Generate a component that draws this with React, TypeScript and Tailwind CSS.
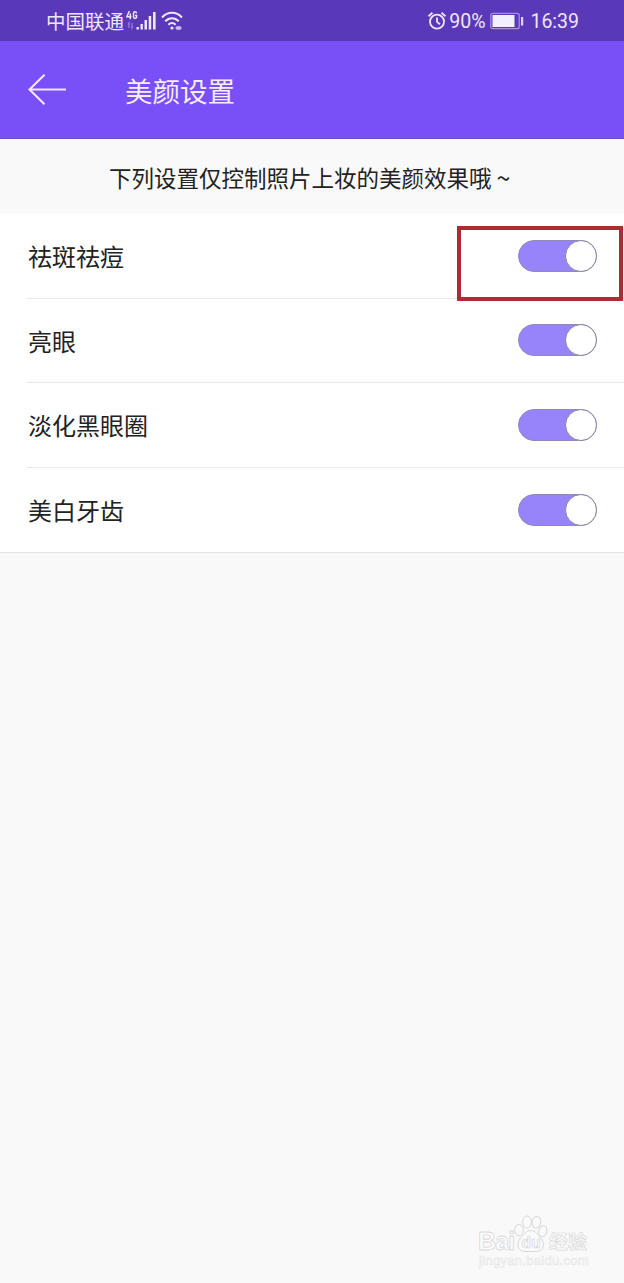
import React, { useState } from "react";

const initialSettings = [
  { id: "spots", label: "祛斑祛痘", enabled: true },
  { id: "eyes", label: "亮眼", enabled: true },
  { id: "darkCircles", label: "淡化黑眼圈", enabled: true },
  { id: "teeth", label: "美白牙齿", enabled: true },
];

interface ToggleProps {
  label: string;
  checked: boolean;
  onChange: () => void;
}

const SignalIcon = () => (
  <svg className="ml-[2px] h-[22px] w-[31px]" viewBox="0 0 31 22" fill="#eee6fb">
    <g fill="none" stroke="#eee6fb" strokeWidth="1.5">
      <path d="M3.4 1 .8 6.8h4.6M4.3 3.5v5.8" />
      <path d="M10.6 3.4C10.300 1.300 7.500 1.300 7.500 3.400v3.300c0 2.300 3.100 2.300 3.100 0V5.600H9" />
    </g>
    <path
      d="M3 18v-5L2 14.500M6 13v5l1-1.500"
      fill="none"
      stroke="#9a78e6"
      strokeWidth="1.3"
    />
    <rect x="10.5" y="17" width="2.4" height="2.5" />
    <rect x="14.5" y="14" width="2.4" height="5.5" />
    <rect x="18.5" y="10" width="2.5" height="9.5" />
    <rect x="22.7" y="6" width="2.5" height="13.5" />
    <rect x="27" y="2" width="2.6" height="17.5" />
  </svg>
);

const WifiIcon = () => (
  <svg
    className="ml-[4px] h-[22px] w-[22px]"
    viewBox="0 0 22 22"
    fill="none"
    stroke="#eee6fb"
    strokeWidth="2"
  >
    <path d="M1 7.5c5.7-6.3 14.3-6.3 20 0" />
    <path d="M4.2 11.3c4-4.2 9.600-4.200 13.600 0" />
    <path d="M7.3 14.8c2.300-2.300 5.100-2.300 7.400 0" />
    <circle cx="11" cy="18" r="1.6" fill="#eee6fb" stroke="none" />
    <ellipse cx="17.5" cy="18" rx="3" ry="1.900" fill="#cbb8f3" stroke="none" />
  </svg>
);

const AlarmIcon = () => (
  <svg
    className="h-[20px] w-[20px]"
    viewBox="0 0 20 20"
    fill="none"
    stroke="#eee6fb"
    strokeWidth="1.8"
  >
    <circle cx="10" cy="10.7" r="7" />
    <path d="M10 6.5v4.4l3 2.3M1.5 5.2l4-3.4M18.5 5.2l-4-3.4" />
  </svg>
);

const BatteryIcon = () => (
  <svg className="ml-[5px] h-[18px] w-[34px]" viewBox="0 0 34 18">
    <rect
      x="0.8"
      y="1.3"
      width="28.4"
      height="15.4"
      rx="2"
      fill="none"
      stroke="#a98ee6"
      strokeWidth="1.3"
    />
    <rect x="2.5" y="3" width="22" height="12" fill="#f4effc" />
    <rect x="31" y="5" width="2.2" height="8.5" fill="#e0d4f7" />
  </svg>
);

const Toggle = ({ label, checked, onChange }: ToggleProps) => (
  <button
    type="button"
    role="switch"
    aria-label={label}
    aria-checked={checked}
    onClick={onChange}
    className={`flex h-8 w-[79px] items-center rounded-full border ${
      checked
        ? "justify-end border-[#9387bd] bg-[#9784fa]"
        : "justify-start border-gray-400 bg-gray-200"
    }`}
  >
    <span className="-mr-px h-8 w-8 shrink-0 rounded-full border-[1.5px] border-[#88819f] bg-white" />
  </button>
);

const Watermark = () => (
  <div className="absolute top-[1213px] left-[478px] w-[114px] text-[#fcfcfc]">
    <div className="flex h-[41px] items-end">
      <span className="w-[36px] font-['Liberation_Sans'] text-[25px] leading-[25px] font-bold tracking-[-0.8px] [-webkit-text-stroke:0.8px_#d9d9d9]">
        Bai
      </span>
      <svg
        className="h-[41px] w-[34px] shrink-0"
        viewBox="0 0 34 41"
        fill="#fafafa"
        stroke="#d8d8d8"
      >
        <ellipse cx="5" cy="17" rx="4.3" ry="5.700" />
        <ellipse cx="13" cy="9" rx="4.3" ry="6" />
        <ellipse cx="22.5" cy="9.3" rx="4.3" ry="5.800" transform="rotate(12 22.5 9.3)" />
        <ellipse cx="28.8" cy="18.2" rx="4" ry="5.500" transform="rotate(12 28.8 18.2)" />
        <path d="M17 17.500c4.500 0 6.500 4 9.500 7.500 4.500 4.500 4.500 12.500-3.500 13.500-4 .4-8-.4-12 0-8.500-.7-8.500-9-4.500-13.500C9.500 22 12 17.500 17 17.500Z" />
        <text
          x="17"
          y="34.5"
          textAnchor="middle"
          fontFamily="Liberation Sans, sans-serif"
          fontSize="16"
          fontWeight="bold"
          strokeWidth="0.7"
        >
          du
        </text>
      </svg>
      <span className="ml-[1px] text-[19px] leading-[26px] font-bold whitespace-nowrap [-webkit-text-stroke:0.7px_#dadada]">
        经验
      </span>
    </div>
    <p className="ml-[1px] font-['Liberation_Sans'] text-[13px] leading-[14px] tracking-[0.3px] text-[#f7f7f7] [-webkit-text-stroke:0.5px_#e6e6e6]">
      jingyan.baidu.com
    </p>
  </div>
);

const App = () => {
  const [settings, setSettings] = useState(initialSettings);

  const toggleSetting = (id: string) => {
    setSettings((prev) =>
      prev.map((item) =>
        item.id === id ? { ...item, enabled: !item.enabled } : item,
      ),
    );
  };

  return (
    <div className="relative h-[1283px] w-[624px] overflow-hidden bg-[#f9f9f9] font-['Noto_Sans_CJK_SC',sans-serif] text-[#222]">
      <div className="flex h-[41px] items-center justify-between bg-[#5a39b8] pr-[45px] pl-[46px] text-[#eee6fb]">
        <div className="flex items-center">
          <span className="pt-px text-[19.5px] leading-none">中国联通</span>
          <SignalIcon />
          <WifiIcon />
        </div>
        <div className="flex items-center font-[Roboto,sans-serif] text-[19.5px] leading-none">
          <AlarmIcon />
          <span className="ml-[2px] pt-[3px]">90%</span>
          <BatteryIcon />
          <span className="ml-[6px] pt-[3px]">16:39</span>
        </div>
      </div>

      <header className="flex h-[98px] items-center border-b border-[#6b4bcf] bg-[#794ff8] pl-7 text-[#f6ecff]">
        <button type="button" aria-label="返回">
          <svg
            className="h-8 w-[39px]"
            viewBox="0 0 39 32"
            fill="none"
            stroke="#f3e4ff"
            strokeWidth="2.2"
          >
            <path d="M38 15.500H1.500M16.500.8 1.500 15.500l15 14.700" />
          </svg>
        </button>
        <h1 className="ml-[58px] pt-[2px] text-[27.5px] leading-none">美颜设置</h1>
      </header>

      <p className="flex h-[75px] items-center pt-[2px] pl-[109px] text-[22.5px] leading-none whitespace-nowrap">
        下列设置仅控制照片上妆的美颜效果哦
        <span className="ml-[5px] text-[25px]">~</span>
      </p>

      <ul className="border-b border-[#e3e3e3] bg-white">
        {settings.map((item) => (
          <li
            key={item.id}
            className="ml-[27px] flex h-[84.5px] items-center justify-between border-b border-[#e9e9e9] pr-[27px] last:border-b-0"
          >
            <span className="ml-px pt-px text-[24px] leading-none">
              {item.label}
            </span>
            <Toggle
              label={item.label}
              checked={item.enabled}
              onChange={() => toggleSetting(item.id)}
            />
          </li>
        ))}
      </ul>

      <div className="pointer-events-none absolute top-[226px] left-[457px] h-[75px] w-[166px] border-4 border-[#ad2b33]" />
      <Watermark />
    </div>
  );
};

export default App;
